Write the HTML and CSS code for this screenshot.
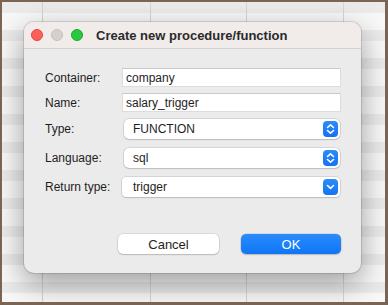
FILE: index.html
```html
<html>
  <head>
    <title>Create new procedure/function</title>
    <link rel="stylesheet" href="styles.css">
  </head>
  <body>
    <div class="frame">
      <div class="dialog">
        <header class="titlebar">
          <span class="light close"></span>
          <span class="light minimize"></span>
          <span class="light zoom"></span>
          <h1 class="title">Create new procedure/function</h1>
        </header>

        <section class="content">
          <div class="form">
            <div class="row">
              <label>Container:</label>
              <div class="field">company</div>
            </div>
            <div class="row">
              <label>Name:</label>
              <div class="field">salary_trigger</div>
            </div>
            <div class="row popup-row first-popup">
              <label>Type:</label>
              <div class="popup">
                <span>FUNCTION</span>
                <span class="stepper">
                  <svg width="9" height="12" viewBox="0 0 9 12">
                    <path d="M1.5 4.5 L4.5 1.8 L7.5 4.5 M1.5 7.5 L4.5 10.2 L7.5 7.5" fill="none" stroke="#fff" stroke-width="1.6" stroke-linecap="round" stroke-linejoin="round"/>
                  </svg>
                </span>
              </div>
            </div>
            <div class="row popup-row">
              <label>Language:</label>
              <div class="popup">
                <span>sql</span>
                <span class="stepper">
                  <svg width="9" height="12" viewBox="0 0 9 12">
                    <path d="M1.5 4.5 L4.5 1.8 L7.5 4.5 M1.5 7.5 L4.5 10.2 L7.5 7.5" fill="none" stroke="#fff" stroke-width="1.6" stroke-linecap="round" stroke-linejoin="round"/>
                  </svg>
                </span>
              </div>
            </div>
            <div class="row popup-row">
              <label>Return type:</label>
              <div class="popup combo">
                <span>trigger</span>
                <span class="stepper">
                  <svg width="9" height="8" viewBox="0 0 9 8">
                    <path d="M1.5 2.5 L4.5 5.3 L7.5 2.5" fill="none" stroke="#fff" stroke-width="1.6" stroke-linecap="round" stroke-linejoin="round"/>
                  </svg>
                </span>
              </div>
            </div>
          </div>

          <div class="actions">
            <button class="btn">Cancel</button>
            <button class="btn primary">OK</button>
          </div>
        </section>
      </div>
    </div>
  </body>
</html>
```

FILE: styles.css
```css
:root {
  --fonts: "Liberation Sans", Arial, sans-serif;
  --frame: #7a6453;
  --titlebar: #f1ebea;
  --panel: #ebebeb;
  --text: #1e1e1e;
  --blue: #1a7ff8;
}

html,
body {
  margin: 0;
  padding: 0;
}

body {
  font-family: var(--fonts);
  color: var(--text);
}

.frame {
  box-sizing: border-box;
  width: 388px;
  height: 305px;
  overflow: hidden;
  border-style: solid;
  border-color: var(--frame);
  border-width: 2px 3px 3px 2px;
  padding: 20px 0 0 22px;
  background:
    linear-gradient(90deg, transparent 40px, #d2d2d2 40px, #d2d2d2 41px, transparent 41px,
      transparent 148px, #d6d6d6 148px, #d6d6d6 149px, transparent 149px,
      transparent 244px, #d6d6d6 244px, #d6d6d6 245px, transparent 245px,
      transparent 341px, #d6d6d6 341px, #d6d6d6 342px, transparent 342px),
    repeating-linear-gradient(180deg, #ebebeb 0, #ebebeb 11px, #f8f8f8 11px, #f8f8f8 28px);
}

.dialog {
  width: 337px;
  height: 251px;
  border-radius: 10px;
  background: var(--panel);
  box-shadow: 0 0 0 1px rgba(0, 0, 0, 0.12), 0 10px 30px rgba(0, 0, 0, 0.38);
  overflow: hidden;
}

.titlebar {
  display: flex;
  align-items: center;
  height: 26px;
  padding: 0 0 0 7px;
  background: var(--titlebar);
  border-bottom: 1px solid #d6d1d0;
}

.light {
  width: 12px;
  height: 12px;
  border-radius: 50%;
  margin-right: 8px;
  box-sizing: border-box;
}

.close {
  background: #fe5f57;
  border: 1px solid #e2463f;
}

.minimize {
  background: #d3d0cf;
  border: 1px solid #c4c1c0;
}

.zoom {
  background: #28c840;
  border: 1px solid #1aab29;
}

.title {
  margin: 0 0 0 5px;
  font-size: 13px;
  font-weight: bold;
  color: #2a2a2a;
}

.content {
  padding: 19px 20px 0 21px;
}

.form {
  display: flex;
  flex-direction: column;
  gap: 6px;
}

.row {
  display: grid;
  grid-template-columns: 77px 1fr;
  align-items: center;
  height: 19px;
  font-size: 12px;
}

.popup-row {
  height: 20px;
  margin-top: 3px;
}

.first-popup {
  margin-top: 1px;
}

.field {
  box-sizing: border-box;
  height: 19px;
  padding: 2px 3px 0;
  background: #fff;
  border: 1px solid #dcdcdc;
  border-top-color: #c9c9c9;
  line-height: 15px;
}

.popup {
  box-sizing: border-box;
  display: flex;
  align-items: center;
  justify-content: space-between;
  height: 20px;
  margin: 0 1px 0 2px;
  padding: 0 2px 0 9px;
  background: #fff;
  border-radius: 5px;
  box-shadow: 0 0 0 0.5px rgba(0, 0, 0, 0.18), 0 1px 1.5px rgba(0, 0, 0, 0.12);
}

.combo {
  margin-left: 0;
  padding-left: 11px;
  border-radius: 4px;
}

.stepper {
  display: flex;
  align-items: center;
  justify-content: center;
  width: 15px;
  height: 16px;
  border-radius: 4px;
  background: linear-gradient(180deg, #2b8cfb, #1573f0);
}

.actions {
  display: flex;
  justify-content: flex-end;
  gap: 22px;
  margin-top: 37px;
}

.btn {
  width: 101px;
  height: 20px;
  padding: 0;
  border: none;
  border-radius: 5px;
  font-family: var(--fonts);
  font-size: 13px;
  color: #1e1e1e;
  background: #fff;
  box-shadow: 0 0 0 0.5px rgba(0, 0, 0, 0.15), 0 1px 1.5px rgba(0, 0, 0, 0.15);
}

.primary {
  width: 100px;
  color: #fff;
  background: linear-gradient(180deg, #2a8bfc, #0f76f6);
}
```
